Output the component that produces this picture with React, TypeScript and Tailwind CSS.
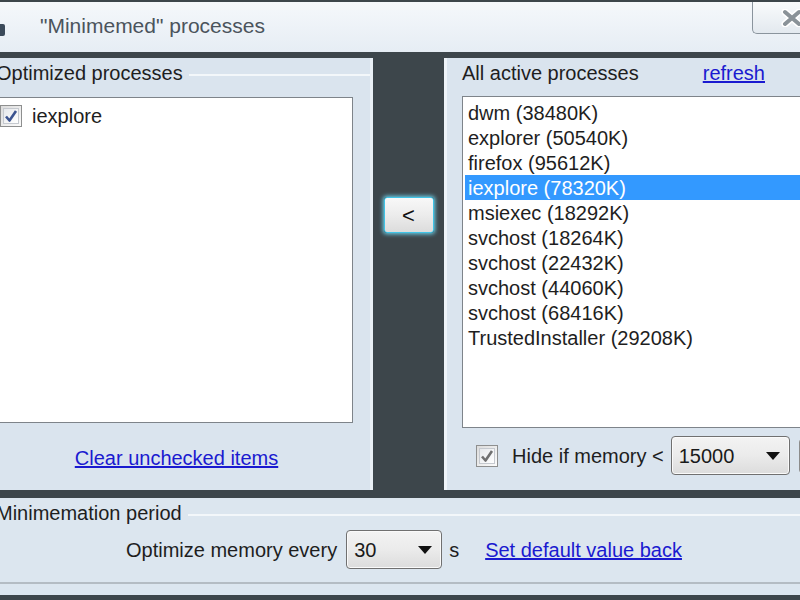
import React from 'react';

const FONT = { fontFamily: '"Liberation Sans", Arial, sans-serif' };

const active = [
  'dwm (38480K)',
  'explorer (50540K)',
  'firefox (95612K)',
  'iexplore (78320K)',
  'msiexec (18292K)',
  'svchost (18264K)',
  'svchost (22432K)',
  'svchost (44060K)',
  'svchost (68416K)',
  'TrustedInstaller (29208K)',
];

function Check({ tone }: { tone: string }) {
  return (
    <div className="w-[22px] h-[22px] shrink-0 border border-[#8e8f8f] bg-gradient-to-br from-[#dcdcdc] to-[#fbfbfb] p-[2px]">
      <div className="w-full h-full border border-[#c5c9cf] bg-gradient-to-br from-[#e6e8eb] to-[#ffffff] flex items-center justify-center">
        <svg width="14" height="14" viewBox="0 0 14 14">
          <path d="M2 7.5 L5.5 11.5 L12 2" fill="none" stroke={tone} strokeWidth="2.6" strokeLinejoin="round" />
        </svg>
      </div>
    </div>
  );
}

function Combo({ value, width }: { value: string; width: string }) {
  return (
    <div className={`${width} h-[39px] shrink-0 rounded-[4px] border border-[#707070] bg-gradient-to-b from-[#f3f3f3] via-[#ebebeb] to-[#dcdcdc] flex items-center pl-[7px] pr-[9px] shadow-[inset_0_0_0_1px_#fafafa]`}>
      <span className="text-[20px] text-[#1a1a1a] flex-1">{value}</span>
      <svg width="14" height="8" viewBox="0 0 14 8">
        <path d="M0 0 H14 L7 8 Z" fill="#111" />
      </svg>
    </div>
  );
}

export default function App() {
  return (
    <div className="w-[800px] h-[600px] overflow-hidden bg-[#3d464b] flex flex-col pt-[2px] whitespace-nowrap" style={FONT}>
      {/* title bar */}
      <div className="h-[50px] shrink-0 flex bg-gradient-to-b from-[#f5f8fb] to-[#e6edf4]">
        <div className="w-[5px] h-[12px] mt-[22px] bg-[#3b4a5a] rounded-r-[2px]" />
        <div className="ml-[35px] mt-[8px] text-[21px] text-[#4b545c]">"Minimemed" processes</div>
        <div className="ml-auto w-[48px] h-[32px] border-l border-b border-[#8a949d] rounded-bl-[5px] bg-gradient-to-b from-[#f9fbfc] to-[#e3e9ef] flex items-center pl-[28px]">
          <svg width="22" height="18" viewBox="0 0 22 18" className="shrink-0">
            <path d="M4 3 L18 15 M18 3 L4 15" stroke="#ffffff" strokeWidth="7" strokeLinecap="round" />
            <path d="M4 3 L18 15 M18 3 L4 15" stroke="#8a9298" strokeWidth="4" strokeLinecap="round" />
          </svg>
        </div>
      </div>

      <div className="h-[6px] shrink-0" />

      {/* panels */}
      <div className="h-[432px] shrink-0 flex">
        <div className="w-[373px] shrink-0 bg-[#dae4ee] border-r-[3px] border-[#e9eff5] flex flex-col">
          <div className="h-[24px] mt-[3px] flex items-center -ml-[4px]">
            <span className="text-[20px] text-[#1e1e1e]">Optimized processes</span>
            <div className="flex-1 h-[2px] bg-[#f3f7fa] ml-[6px] mt-[4px]" />
          </div>
          <div className="mt-[12px] -ml-[4px] w-[357px] h-[326px] bg-white border border-[#7e848a] pt-[7px] pl-[3px]">
            <div className="flex items-center gap-[10px] h-[22px]">
              <Check tone="#3c5490" />
              <span className="text-[20px] text-[#1e1e1e]">iexplore</span>
            </div>
          </div>
          <div className="w-[353px] mt-[20px] text-center">
            <span className="text-[20px] text-[#1a1ad0] underline">Clear unchecked items</span>
          </div>
        </div>

        <div className="w-[71px] shrink-0 flex justify-center">
          <div className="mt-[139px] w-[50px] h-[36px] rounded-[3px] border border-[#3fc3e6] shadow-[0_0_4px_1px_#6fd8f2] bg-gradient-to-b from-[#f8f8f8] via-[#ececec] to-[#dcdcdc] flex items-center justify-center text-[22px] text-[#111]">
            &lt;
          </div>
        </div>

        <div className="flex-1 min-w-0 overflow-hidden bg-[#dae4ee] border-l-[3px] border-[#eef3f8] flex flex-col">
          <div className="h-[24px] mt-[3px] flex items-center pl-[15px]">
            <span className="text-[20px] text-[#1e1e1e]">All active processes</span>
            <span className="ml-[64px] text-[20px] text-[#1a1ad0] underline">refresh</span>
          </div>
          <div className="mt-[11px] ml-[15px] w-[360px] h-[332px] shrink-0 bg-white border border-[#7e848a] pt-[3px] pl-[2px]">
            {active.map((p, i) => (
              <div
                key={i}
                className={`h-[25px] flex items-center pl-[3px] text-[20px] ${i === 3 ? 'bg-[#3399ff] text-white' : 'text-[#1e1e1e]'}`}
              >
                {p}
              </div>
            ))}
          </div>
          <div className="mt-[8px] flex items-center pl-[29px]">
            <Check tone="#707070" />
            <span className="ml-[14px] shrink-0 text-[20px] text-[#1e1e1e]">Hide if memory &lt;</span>
            <div className="ml-[7px] shrink-0">
              <Combo value="15000" width="w-[119px]" />
            </div>
            <div className="ml-[9px] w-[20px] h-[34px] shrink-0 rounded-[3px] border border-[#8c8c8c] bg-[#ececec]" />
          </div>
        </div>
      </div>

      <div className="h-[8px] shrink-0" />

      {/* bottom group */}
      <div className="h-[97px] shrink-0 bg-[#dce6ef] flex flex-col">
        <div className="h-[24px] mt-[3px] flex items-center -ml-[4px]">
          <span className="text-[20px] text-[#1e1e1e]">Minimemation period</span>
          <div className="flex-1 h-[2px] bg-[#f3f7fa] ml-[6px] mt-[4px]" />
        </div>
        <div className="mt-[5px] flex items-center pl-[126px]">
          <span className="text-[20px] text-[#1e1e1e]">Optimize memory every</span>
          <div className="ml-[9px]">
            <Combo value="30" width="w-[96px]" />
          </div>
          <span className="ml-[7px] text-[20px] text-[#1e1e1e]">s</span>
          <span className="ml-[26px] text-[20px] text-[#1a1ad0] underline">Set default value back</span>
        </div>
        <div className="mt-auto mb-[11px] h-[2px] bg-[#b4bcc3]" />
      </div>
    </div>
  );
}
